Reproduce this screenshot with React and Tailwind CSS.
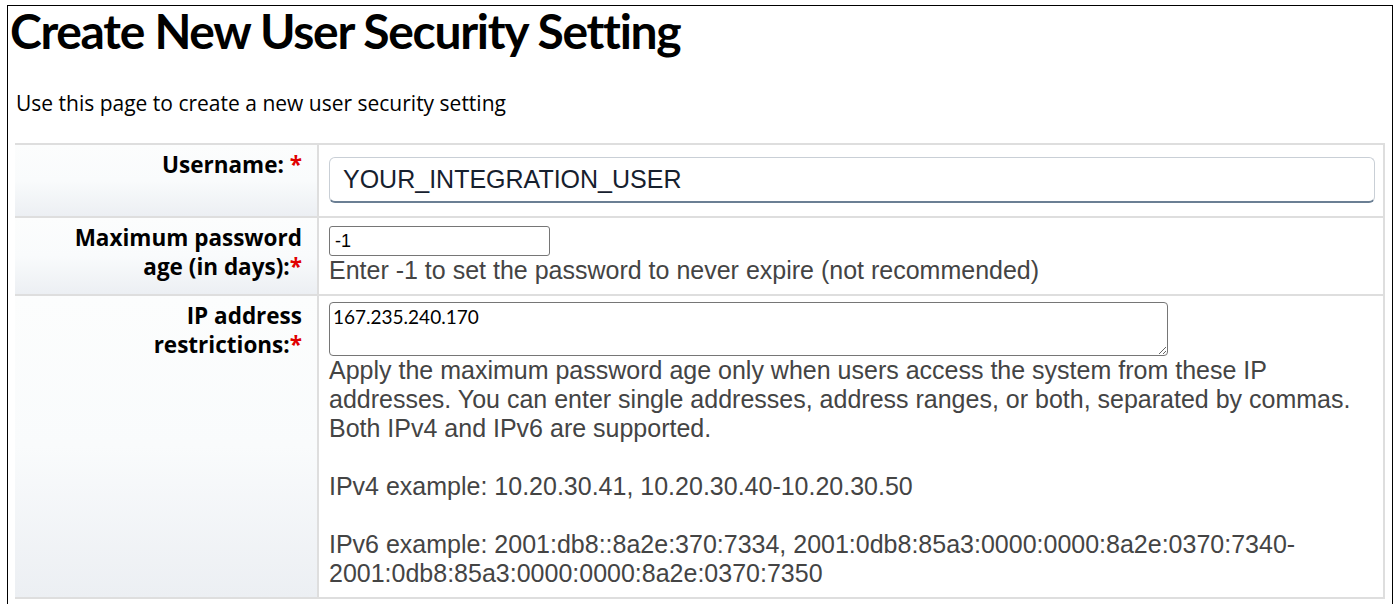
const TITLE_FONT = { fontFamily: "Lato, 'Open Sans', sans-serif" };
const LABEL_FONT = { fontFamily: "'Open Sans', Lato, sans-serif" };

function Req() {
  return <span className="text-[#e00000]">*</span>;
}

function Row({ label, children, last, pad }) {
  return (
    <div className={`grid grid-cols-[304px_1fr] border-t-2 border-[#dedede] ${last ? "border-b-2" : ""}`}>
      <div
        className="border-r-2 border-[#dedede] bg-linear-to-b from-[#fcfdfd] via-[#f9fbfc] to-[#eceff3] pr-[15px] pt-[5px] text-right text-[22.5px] leading-[29px] font-bold text-black"
        style={LABEL_FONT}
      >
        {label}
      </div>
      <div className={`pl-[10px] pr-[10px] ${pad}`}>{children}</div>
    </div>
  );
}

export default function App() {
  return (
    <div className="h-screen overflow-hidden bg-white pl-[7px] pr-[3px] pt-[5px]">
      <div className="h-full border-x border-t border-black">
        <h1 className="ml-[2px] text-[48px] leading-[50px] font-bold tracking-[-1.3px] text-black" style={TITLE_FONT}>
          Create New User Security Setting
        </h1>
        <p className="ml-[8px] mt-[35px] text-[21px] leading-[24px] text-black" style={LABEL_FONT}>
          Use this page to create a new user security setting
        </p>
        <div className="ml-[7px] mr-[7px] mt-[28px] border-r-2 border-[#dedede] font-['Liberation_Sans',Arial,sans-serif]">
          <Row pad="pt-[12px] pb-[13px]" label={<>Username: <Req /></>}>
            <input
              readOnly
              value="YOUR_INTEGRATION_USER"
              className="block h-[46px] w-[1046px] rounded-[6px] border border-[#c9cfd6] border-b-2 border-b-[#6b7f94] bg-white px-[13px] text-[25px] text-[#16202e] outline-none"
            />
          </Row>
          <Row pad="pt-[8px] pb-[9px]" label={<>Maximum password<br />age (in days):<Req /></>}>
            <input
              readOnly
              value="-1"
              className="block h-[30px] w-[221px] rounded-[3px] border border-[#767676] bg-white px-[5px] text-[18px] text-black outline-none"
            />
            <div className="text-[25px] leading-[29px] text-[#444]">
              Enter -1 to set the password to never expire (not recommended)
            </div>
          </Row>
          <Row last pad="pt-[6px] pb-[9px]" label={<>IP address<br />restrictions:<Req /></>}>
            <textarea
              readOnly
              value="167.235.240.170"
              className="block h-[54px] w-[839px] resize-y rounded-[4px] border border-[#767676] bg-white px-[3px] py-[3px] text-[19px] leading-[22px] text-black outline-none"
              style={TITLE_FONT}
            />
            <div className="whitespace-nowrap text-[25px] leading-[29px] text-[#444]">
              Apply the maximum password age only when users access the system from these IP
              <br />
              addresses. You can enter single addresses, address ranges, or both, separated by commas.
              <br />
              Both IPv4 and IPv6 are supported.
              <br />
              <br />
              IPv4 example: 10.20.30.41, 10.20.30.40-10.20.30.50
              <br />
              <br />
              IPv6 example: 2001:db8::8a2e:370:7334, 2001:0db8:85a3:0000:0000:8a2e:0370:7340-
              <br />
              2001:0db8:85a3:0000:0000:8a2e:0370:7350
            </div>
          </Row>
        </div>
      </div>
    </div>
  );
}
